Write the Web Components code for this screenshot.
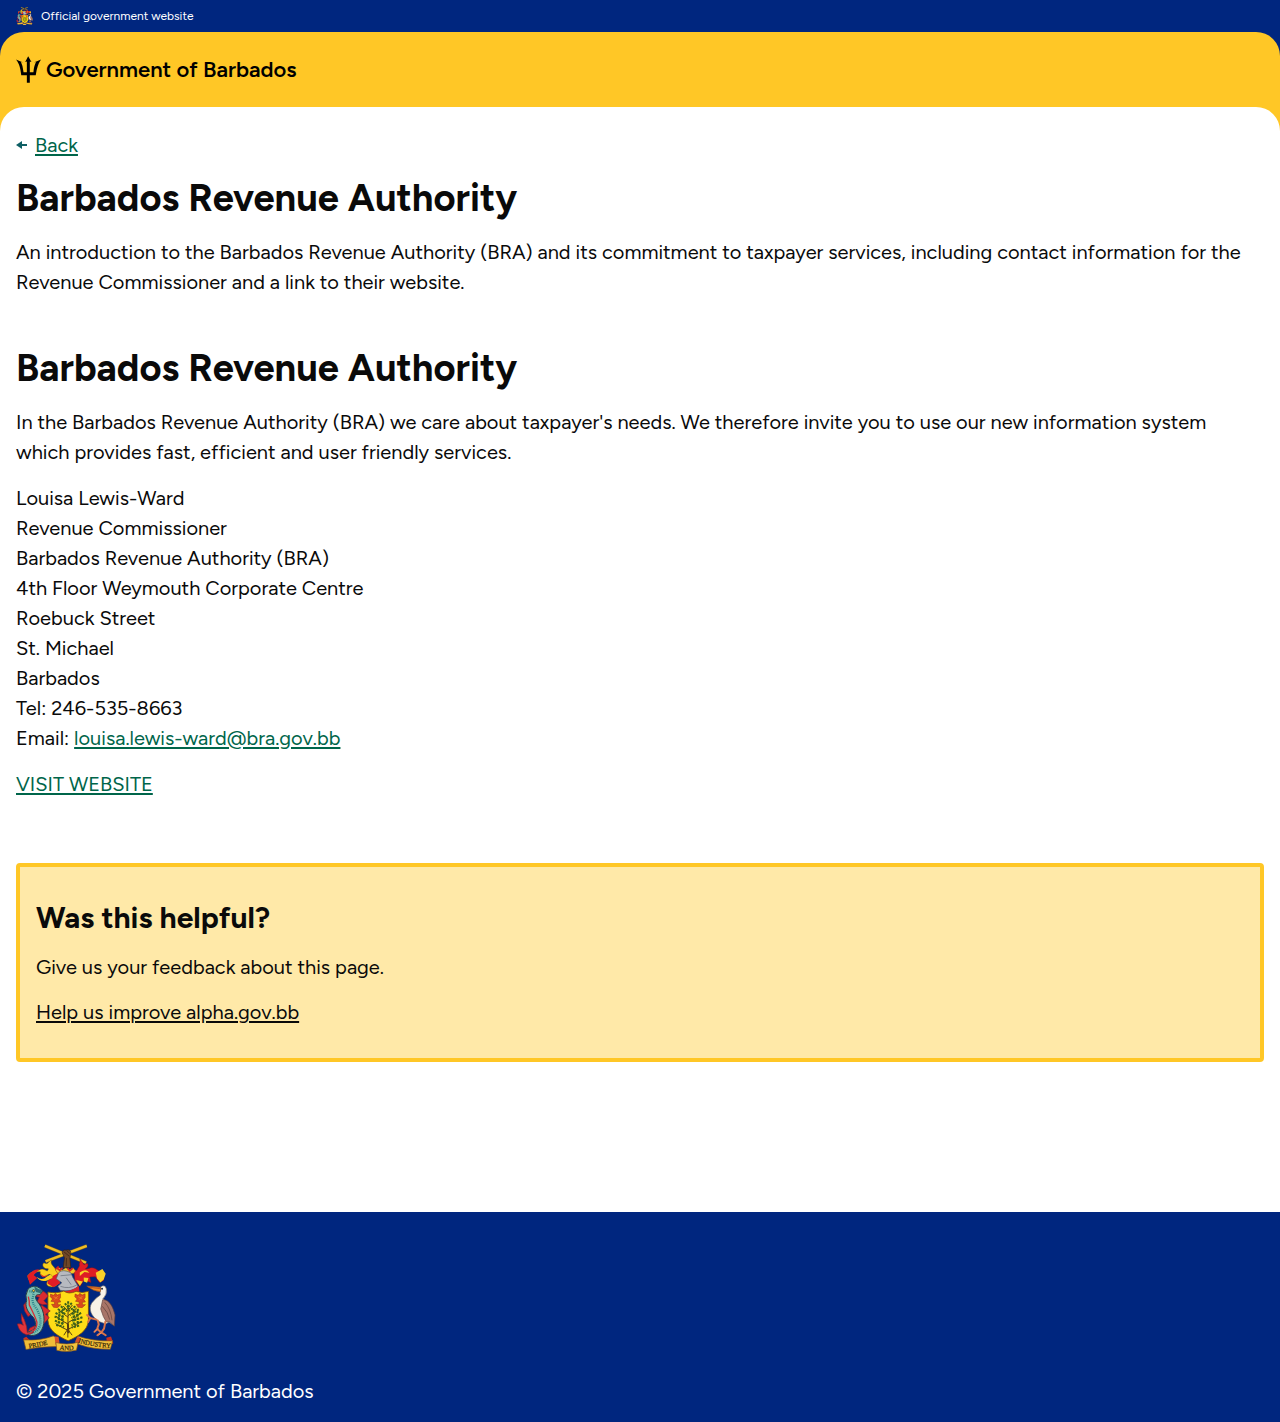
<!DOCTYPE html>
<html lang="en">
<head>
<meta charset="utf-8">
<meta name="viewport" content="width=device-width, initial-scale=1">
<title>Barbados Revenue Authority</title>
<style>
  body { margin: 0; font-family: Figtree, Lato, sans-serif; font-size: 20px; line-height: 30px; color: #0a0a0a; background: #fff; }
</style>
</head>
<body>
<gov-page>
  <gov-banner slot="top">Official government website</gov-banner>
  <gov-header slot="top">Government of Barbados</gov-header>
  <back-link href="#back">Back</back-link>
  <page-section heading="Barbados Revenue Authority" level="1">
    <gov-text>An introduction to the Barbados Revenue Authority (BRA) and its commitment to taxpayer services, including contact information for the Revenue Commissioner and a link to their website.</gov-text>
  </page-section>
  <page-section heading="Barbados Revenue Authority" level="2">
    <gov-text>In the Barbados Revenue Authority (BRA) we care about taxpayer's needs. We therefore invite you to use our new information system which provides fast, efficient and user friendly services.</gov-text>
    <gov-text>Louisa Lewis-Ward<br>Revenue Commissioner<br>Barbados Revenue Authority (BRA)<br>4th Floor Weymouth Corporate Centre<br>Roebuck Street<br>St. Michael<br>Barbados<br>Tel: 246-535-8663<br>Email: <gov-link href="mailto:louisa.lewis-ward@bra.gov.bb">louisa.lewis-ward@bra.gov.bb</gov-link></gov-text>
    <gov-text><gov-link href="#website">VISIT WEBSITE</gov-link></gov-text>
  </page-section>
  <feedback-box heading="Was this helpful?">
    <gov-text>Give us your feedback about this page.</gov-text>
    <gov-text><gov-link href="#feedback">Help us improve alpha.gov.bb</gov-link></gov-text>
  </feedback-box>
  <gov-footer slot="bottom">© 2025 Government of Barbados</gov-footer>
</gov-page>

<template id="arms">
<style>
  :host { display: block; flex: none; width: 101px; height: 108px; }
  svg { display: block; width: 100%; height: 100%; }
  text { font: 20px "Liberation Serif", serif; fill: #332508; stroke: #332508; stroke-width: 0.6px; }
  :host([small]) { width: 17px; height: 18px; }
  :host([small]) text { display: none; }
</style>
<svg viewBox="30 24 304 324" role="img" aria-label="Coat of arms of Barbados">
  <!-- crossed canes and fist -->
  <path d="M117 29 L241 80 M243 29 L119 76" stroke="#7a611c" stroke-width="10"/>
  <path d="M117 29 L241 80 M243 29 L119 76" stroke="#efbd26" stroke-width="7"/>
  <path d="M169 50 q2 -11 12 -8 q12 -4 14 7 l-3 18 l3 28 h-23 l4 -30z" fill="#704728" stroke="#352012" stroke-width="2"/>
  <path d="M174 47 l16 13 M183 44 l9 8 M182 66 l-1 25" stroke="#352012" stroke-width="2" fill="none"/>
  <!-- mantling -->
  <path d="M151 127 C132 135 145 109 127 116 C118 127 99 122 103 107 C87 105 77 117 85 132 C73 142 65 130 65 119 C70 111 83 103 100 102 C114 91 126 114 127 98 C112 100 106 86 114 80 C127 88 127 74 137 72 C131 86 148 92 151 104 L164 109 L161 140 L150 150 C129 158 114 146 127 133 C136 137 145 138 151 127Z" fill="#fbd11b" stroke="#66420c" stroke-width="1.5"/>
  <path d="M100 101 C84 96 73 112 64 119 L72 146 L94 126 L83 117Z M127 113 C117 129 105 124 106 114 C112 124 122 118 127 113Z M142 119 C137 133 125 127 125 142 L142 154 L162 142 L158 111Z M147 99 l10 -10 l9 15 l-11 8z" fill="#e01c25"/>
  <path d="M92 122 Q108 136 122 122 L136 114 L140 126 L124 133 Q104 140 92 122Z" fill="#fbd11b"/>
  <path d="M205 111 L197 98 L213 103 L221 89 C218 79 226 79 222 68 L235 86 C249 76 251 90 239 98 C248 101 253 90 268 97 L280 105 L294 107 L294 133 L281 139 L269 122 L252 123 L256 139 L234 133 L223 151 L207 134Z" fill="#df1d24" stroke="#7c1519" stroke-width="1.5"/>
  <path d="M270 110 L290 99 L300 113 L294 130 L284 139 L274 127Z M222 109 q19 -14 29 1 l-15 -2 -14 12z M211 132 l20 4 -9 14z M234 124 l14 2 -4 14 -10 -4z" fill="#f8d128"/>
  <path d="M148 101 l12 -6 9 7 11 -7 10 7 12 -7 7 10 -6 7 -46 2z" fill="#f3c526" stroke="#70420d"/>
  <path d="M153 96 l9 7 8 -8 M185 96 l7 8 9 -8" fill="none" stroke="#d62422" stroke-width="5"/>
  <!-- helmet -->
  <path d="M159 109 Q171 98 195 110 L201 124 L217 151 Q200 169 163 163 L156 151 L168 140 L151 128Z" fill="#b7bac0" stroke="#555a65" stroke-width="2"/>
  <path d="M164 119 L196 116 M181 125 L196 146 M164 151 Q189 160 213 147" fill="none" stroke="#626873" stroke-width="2"/>
  <path d="M174 166 q26 -1 45 -17 l2 18 -42 8z" fill="#db232b"/>
  <!-- shield -->
  <path d="M126 168 Q154 173 174 165 Q188 176 211 166 Q229 173 248 166 V253 C247 286 213 303 187 315 C159 302 128 286 126 253Z" fill="#fedc17" stroke="#7b4b0d" stroke-width="2.5"/>
  <g fill="#db4a1d" stroke="#943019" stroke-width="1.5">
    <path d="M134 174 l9 4 5 -6 7 5 9 -4 0 12 -4 5 5 8 -9 1 0 7 9 0 -10 9 -12 -1 -6 -9 9 0 0 -7 -11 -2 5 -7 -7 -7z"/>
    <path d="M208 174 l9 4 5 -6 7 5 9 -4 0 12 -4 5 5 8 -9 1 0 7 9 0 -10 9 -12 -1 -6 -9 9 0 0 -7 -11 -2 5 -7 -7 -7z"/>
  </g>
  <path d="M143 182 l12 6 M156 180 l-10 11 M217 182 l12 6 M230 180 l-10 11" stroke="#f7a22d" stroke-width="1.5" fill="none"/>
  <!-- fig tree -->
  <path d="M187 206 L186 290 M186 283 Q169 276 149 263 M187 280 Q207 273 226 257 M186 264 Q167 256 150 240 M187 260 Q207 251 224 231 M187 244 Q174 235 158 221 M187 239 Q203 230 213 215 M187 226 L172 210 M187 223 L200 207 M185 281 l-11 17 M187 282 l12 16 M186 282 v23" fill="none" stroke="#563e12" stroke-width="3"/>
  <path d="M186 262 L188 292" stroke="#563e12" stroke-width="6"/>
  <g fill="none" stroke="#3c621b" stroke-width="6" stroke-dasharray="7 3">
    <path d="M187 196 V220 M177 202 L187 214 M198 201 L187 213 M165 211 L184 226 M209 211 L189 225 M156 219 L181 236 M219 220 L192 238 M149 231 L173 244 M226 231 L197 246 M146 242 L172 252 M230 244 L199 255 M147 254 L174 265 M229 257 L197 268 M151 267 L175 273 M220 269 L198 275"/>
    <path d="M161 226 L158 263 M171 218 L170 267 M203 219 L204 267 M215 225 L216 264"/>
  </g>
  <!-- dolphin -->
  <path d="M102 163 Q116 164 127 180 L114 194 L125 205 L110 206 L92 200 L100 184 L88 181Z M68 190 L53 207 L56 225 L66 242 L83 232Z M107 207 L133 225 L119 235 L130 245 L115 262 L96 280 L60 298 L72 276 L90 268 L94 235Z" fill="#d92b31" stroke="#831e29" stroke-width="2"/>
  <path d="M66 160 C77 146 99 148 110 166 L102 176 C85 174 85 187 99 203 C117 225 118 261 108 280 C98 302 68 304 62 290 L73 286 C91 281 93 264 83 245 C64 228 56 210 62 194 Q56 178 66 160Z" fill="#7fc0b4" stroke="#293f46" stroke-width="3"/>
  <path d="M70 166 Q88 164 81 183 Q76 200 93 220 Q109 250 101 272 Q91 293 68 291" fill="none" stroke="#31858b" stroke-width="7" stroke-dasharray="3 3"/>
  <path d="M67 182 q4 13 3 25 q18 35 23 52 q0 25 -16 27" fill="none" stroke="#d62d35" stroke-width="4"/>
  <path d="M64 290 L62 272 Q56 250 46 233 Q44 254 52 268 Q44 262 34 264 Q40 290 60 296 Q76 296 84 288 Q70 288 64 290Z" fill="#e2343a" stroke="#831e29" stroke-width="2"/>
  <path d="M84 150 l12 8 14 6 -6 8 -14 -4z" fill="#2d6d73"/>
  <circle cx="83" cy="164" r="3.5" fill="#f5cc37" stroke="#263637" stroke-width="2"/>
  <!-- pelican -->
  <path d="M284 153 Q298 143 302 159 Q305 176 292 188 L307 203 C322 221 324 250 323 268 L310 258 L300 264 L280 257 C256 241 247 219 258 201 Q271 184 284 177 Q281 163 284 153Z" fill="#f8f2e7" stroke="#6e6966" stroke-width="2"/>
  <path d="M291 191 C311 190 322 213 328 237 L326 271 L312 257 L302 258 L293 242 L285 219Z" fill="#a87568" stroke="#613f3b" stroke-width="2"/>
  <path d="M297 199 Q315 218 319 253 M290 211 Q308 230 312 251" stroke="#755048" fill="none" stroke-width="3"/>
  <path d="M285 154 L243 150 Q262 166 284 167Z" fill="#ed8c26" stroke="#914922" stroke-width="2"/>
  <path d="M246 153 L283 158" stroke="#b03a24" stroke-width="2"/>
  <circle cx="289" cy="158" r="3" fill="#242730"/>
  <path d="M276 254 L279 265 L274 280 M299 257 L295 278 L286 291 M244 237 L254 246 L247 258 M254 246 L272 251 M276 278 l-10 10 M275 280 l11 9 M287 289 l-12 9 M288 290 l12 8" fill="none" stroke="#d8734a" stroke-width="6" stroke-linecap="round"/>
  <path d="M276 278 l-10 10 M288 290 l-10 8" fill="none" stroke="#f6a279" stroke-width="2"/>
  <!-- motto ribbon -->
  <path d="M52 307 l9 -4 11 10 -12 18z M302 306 l14 -4 7 20 -14 8 -6 -12z" fill="#c93123"/>
  <path d="M53 312 Q105 315 142 300 L157 308 L153 332 Q104 332 60 341Z" fill="#f0bd38" stroke="#805018" stroke-width="2"/>
  <path d="M218 301 Q259 316 321 315 L314 340 Q261 341 220 326 L209 316Z" fill="#f0bd38" stroke="#805018" stroke-width="2"/>
  <path d="M146 302 l12 1 3 17 -12 7z M214 302 l-6 19 10 6 8 -20z" fill="#d7502b"/>
  <path d="M150 320 Q184 329 217 319 L212 343 Q183 351 153 344Z" fill="#f5c43c" stroke="#805018" stroke-width="2"/>
  <path id="left" d="M69 337 Q108 332 150 319" fill="none"/>
  <path id="mid" d="M161 341 Q184 346 215 340" fill="none"/>
  <path id="right" d="M217 320 Q260 335 325 336" fill="none"/>
  <text><textPath href="#left">PRIDE</textPath></text>
  <text><textPath href="#mid">AND</textPath></text>
  <text><textPath href="#right">INDUSTRY</textPath></text>
</svg>
</template>

<script>
const define = (name, render) => customElements.define(name, class extends HTMLElement {
  constructor() {
    super();
    this.attachShadow({ mode: "open" });
  }
  connectedCallback() {
    const content = render(this);
    if (typeof content === "string") this.shadowRoot.innerHTML = content;
    else this.shadowRoot.replaceChildren(content);
  }
});

define("coat-of-arms", () => document.getElementById("arms").content.cloneNode(true));

define("gov-page", () => `
<style>
  :host { display: flex; flex-direction: column; min-height: 100vh; background: #fff; }
  .top { background: #00267f; }
  .wrap { background: #ffc726; }
  main { background: #fff; border-radius: 24px 24px 0 0; padding: 23px 16px 150px; }
  .bottom { margin-top: auto; }
</style>
<div class="top"><slot name="top"></slot></div>
<div class="wrap"><main><slot></slot></main></div>
<div class="bottom"><slot name="bottom"></slot></div>`);

define("gov-banner", () => `
<style>
  :host { display: flex; align-items: center; gap: 8px; height: 32px; padding: 0 16px; color: #fff; font-size: 12px; line-height: 16px; }
</style>
<coat-of-arms small></coat-of-arms><span><slot></slot></span>`);

define("gov-header", () => `
<style>
  :host { display: block; background: #ffc726; border-radius: 24px 24px 0 0; padding: 24px 16px; color: #000; }
  a { display: flex; width: fit-content; align-items: center; gap: 5px; color: inherit; text-decoration: none; font-weight: 600; font-size: 22px; line-height: 27px; }
  svg { display: block; flex: none; }
</style>
<a href="#home"><svg width="25" height="27" viewBox="0 0 76 81" aria-hidden="true">
  <path d="M37 0 L47 18 L42 16 V49 H53 C54 35 57 25 61 18 L54 19 Q66 15 76 10 Q64 27 60 58 H42 V81 H33 V58 H16 C13 34 10 23 0 10 Q10 15 22 19 L15 18 Q21 29 23 49 H33 V16 L28 18Z"/>
</svg><span><slot></slot></span></a>`);

define("back-link", el => `
<style>
  :host { display: flex; align-items: center; gap: 8px; margin-bottom: 15px; color: #00654a; }
  a { color: inherit; text-decoration-thickness: 2px; text-underline-offset: 2px; }
</style>
<svg width="11" height="8" viewBox="0 0 11 8" aria-hidden="true"><path d="M0 4 L6 0 V3 H11 V5 H6 V8Z" fill="#0e5f64"/></svg>
<a href="${el.getAttribute("href")}"><slot></slot></a>`);

define("gov-text", () => `
<style>
  :host { display: block; margin-top: var(--text-gap, 16px); }
  p { margin: 0; }
</style>
<p><slot></slot></p>`);

define("gov-link", el => `
<style>
  :host { display: inline; }
  a { color: var(--link-color, #00654a); text-decoration-thickness: 2px; text-underline-offset: 2px; }
</style>
<a href="${el.getAttribute("href")}"><slot></slot></a>`);

define("page-section", el => {
  const tag = "h" + el.getAttribute("level");
  return `
<style>
  :host { display: block; }
  :host([level="2"]) { margin-top: 48px; }
  ${tag} { margin: 0; font-size: 38px; line-height: 46px; font-weight: 700; }
</style>
<${tag}>${el.getAttribute("heading")}</${tag}>
<slot></slot>`;
});

define("feedback-box", el => `
<style>
  :host { display: block; margin-top: 64px; padding: 31px 16px; border: 4px solid #ffc726; border-radius: 4px; background: #ffe9a8; --link-color: #0a0a0a; --text-gap: 15px; }
  h2 { margin: 0; font-size: 30px; line-height: 39px; font-weight: 700; }
</style>
<h2>${el.getAttribute("heading")}</h2>
<slot></slot>`);

define("gov-footer", () => `
<style>
  :host { display: block; background: #00267f; color: #fff; padding: 32px 16px 16px; }
  footer { display: flex; flex-direction: column; gap: 24px; }
  p { margin: 0; }
</style>
<footer><coat-of-arms></coat-of-arms><p><slot></slot></p></footer>`);
</script>
</body>
</html>
